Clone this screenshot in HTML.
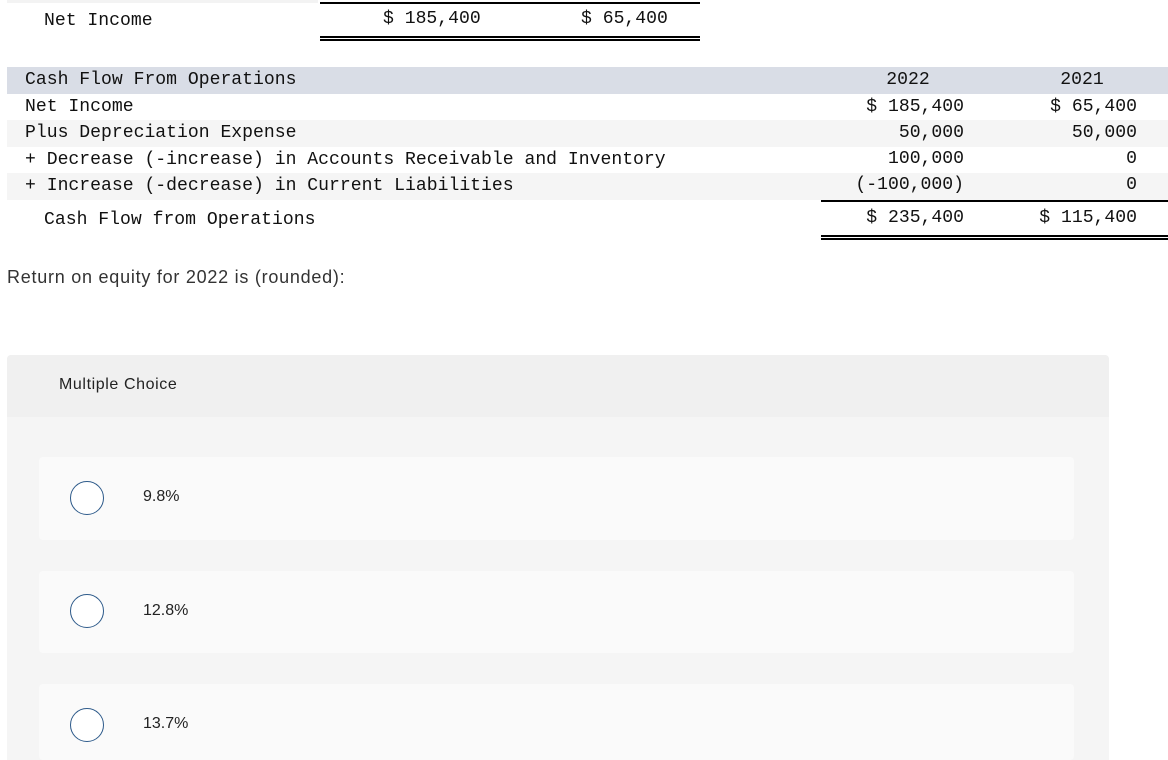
<!DOCTYPE html>
<html><head><meta charset="utf-8"><style>
body{margin:0;width:1168px;height:760px;background:#fff;position:relative;overflow:hidden;font-family:"Liberation Mono",monospace;font-size:18.1px;color:#111}
.a{position:absolute;white-space:pre;line-height:26px}
.r{position:absolute;left:7px;width:1161px}
.s{font-family:"Liberation Sans",sans-serif;color:#333}
.opt{position:absolute;left:39px;width:1035px;background:#fafafa;border-radius:4px}
.c{position:absolute;left:70px;width:32px;height:32px;border:1.5px solid #2d5a8a;border-radius:50%;background:#fff}
.ot{position:absolute;left:143px;font-family:"Liberation Sans",sans-serif;font-size:16px;color:#222;letter-spacing:0}
</style></head><body>
<div style="position:absolute;left:7px;top:0;width:311px;height:3px;background:#f3f3f3"></div>
<div style="position:absolute;left:320px;top:2px;width:380px;height:2px;background:#000"></div>
<div style="position:absolute;left:320px;top:36px;width:380px;height:1.5px;background:#000"></div>
<div style="position:absolute;left:320px;top:39px;width:380px;height:1.5px;background:#000"></div>
<div class="a" style="left:44px;top:8px">Net Income</div>
<div class="a" style="left:383px;top:6px">$ 185,400</div>
<div class="a" style="left:581px;top:6px">$ 65,400</div>

<div class="r" style="top:67px;height:27px;background:#d9dde6"></div>
<div class="r" style="top:120px;height:27px;background:#f5f5f5"></div>
<div class="r" style="top:173px;height:27px;background:#f5f5f5"></div>
<div class="a" style="left:25px;top:67px">Cash Flow From Operations</div>
<div class="a" style="left:25px;top:94px">Net Income</div>
<div class="a" style="left:25px;top:120px">Plus Depreciation Expense</div>
<div class="a" style="left:25px;top:147px">+ Decrease (-increase) in Accounts Receivable and Inventory</div>
<div class="a" style="left:25px;top:173px">+ Increase (-decrease) in Current Liabilities</div>
<div class="a" style="left:44px;top:207px">Cash Flow from Operations</div>

<div class="a" style="left:858px;width:100px;text-align:center;top:67px">2022</div>
<div class="a" style="left:1032px;width:100px;text-align:center;top:67px">2021</div>
<div class="a" style="right:204px;text-align:right;top:94px">$ 185,400
   50,000
  100,000
(-100,000)</div>
<div class="a" style="right:31px;text-align:right;top:94px">$ 65,400
 50,000
      0
      0</div>
<div style="position:absolute;left:821px;top:200px;width:347px;height:1.5px;background:#000"></div>
<div class="a" style="right:204px;top:205px">$ 235,400</div>
<div class="a" style="right:31px;top:205px">$ 115,400</div>
<div style="position:absolute;left:821px;top:235px;width:347px;height:1.5px;background:#000"></div>
<div style="position:absolute;left:821px;top:238px;width:347px;height:1.5px;background:#000"></div>

<div class="a s" style="left:7px;top:264px;font-size:18px;letter-spacing:0.75px">Return on equity for 2022 is (rounded):</div>

<div style="position:absolute;left:7px;top:355px;width:1102px;height:405px;background:#f5f5f5;border-radius:4px 4px 0 0"></div>
<div style="position:absolute;left:7px;top:355px;width:1102px;height:62px;background:#f0f0f0;border-radius:4px 4px 0 0"></div>
<div class="a s" style="left:59px;top:372px;font-size:16px;letter-spacing:0.6px;color:#222">Multiple Choice</div>

<div class="opt" style="top:457px;height:83px"></div>
<div class="c" style="top:481px"></div>
<div class="ot" style="top:488px">9.8%</div>
<div class="opt" style="top:571px;height:82px"></div>
<div class="c" style="top:594px"></div>
<div class="ot" style="top:602px">12.8%</div>
<div class="opt" style="top:684px;height:76px"></div>
<div class="c" style="top:708px"></div>
<div class="ot" style="top:715px">13.7%</div>
</body></html>
